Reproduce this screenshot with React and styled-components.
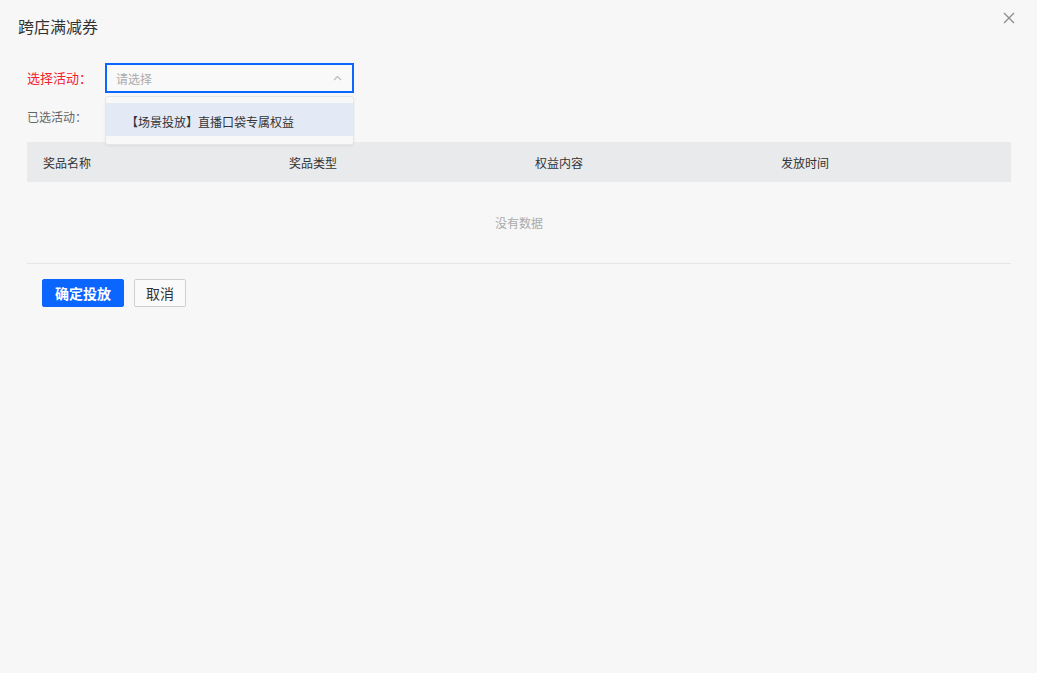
import React from 'react';
import styled, { createGlobalStyle } from 'styled-components';

const GlobalStyle = createGlobalStyle`
  html, body {
    margin: 0;
    padding: 0;
    background: #f7f7f7;
  }
  body {
    font-family: "Noto Sans CJK SC", "Noto Sans", sans-serif;
    color: #333;
  }
`;

const Modal = styled.div`
  position: relative;
  width: 1037px;
  height: 673px;
  background: #f7f7f7;
  box-sizing: border-box;
`;

const Title = styled.h2`
  margin: 0;
  padding: 15px 0 0 18px;
  font-size: 16px;
  line-height: 22px;
  font-weight: 400;
  color: #333;
`;

const CloseButton = styled.button`
  position: absolute;
  top: 11px;
  right: 21px;
  width: 14px;
  height: 14px;
  padding: 0;
  border: 0;
  background: none;
  display: flex;
  align-items: center;
  justify-content: center;
`;

const Body = styled.div`
  padding: 26px 26px 0 27px;
`;

const FormRow = styled.div`
  display: flex;
  align-items: center;
  margin-top: ${({ gap }) => gap || 0}px;
`;

const Label = styled.span`
  width: 78px;
  font-size: ${({ required }) => (required ? 13 : 12)}px;
  line-height: 24px;
  color: ${({ required }) => (required ? '#f5222d' : '#666')};
`;

const SelectWrap = styled.div`
  position: relative;
  width: 249px;
`;

const SelectBox = styled.div`
  height: 30px;
  box-sizing: border-box;
  border: 2px solid #0a66ff;
  background: #f9f9f9;
  display: flex;
  align-items: center;
  justify-content: space-between;
  padding: 0 10px 0 9px;
  font-size: 12px;
  color: #aaa;
`;

const Dropdown = styled.ul`
  position: absolute;
  top: 33px;
  left: 0;
  right: 0;
  margin: 0;
  padding: 6px 0 8px;
  list-style: none;
  background: #f8f8f8;
  border: 1px solid #e6e6e6;
  border-radius: 3px;
  box-shadow: 0 1px 3px rgba(0, 0, 0, 0.06);
  z-index: 10;
`;

const Option = styled.li`
  height: 33px;
  box-sizing: border-box;
  padding: 9px 0 0 20px;
  line-height: 20px;
  font-size: 12px;
  color: #333;
  background: ${({ active }) => (active ? '#e3eaf6' : 'transparent')};
`;

const Table = styled.div`
  margin-top: 13px;
  border-bottom: 1px solid #e6e6e6;
`;

const HeadRow = styled.div`
  display: grid;
  grid-template-columns: repeat(4, 1fr);
  height: 40px;
  align-items: center;
  background: #e9eaec;
`;

const HeadCell = styled.div`
  padding-left: 16px;
  font-size: 12px;
  color: #333;
`;

const Empty = styled.div`
  height: 81px;
  display: flex;
  align-items: center;
  justify-content: center;
  font-size: 12px;
  color: #aaa;
`;

const Actions = styled.div`
  display: flex;
  gap: 10px;
  padding: 15px 0 0 15px;
`;

const Button = styled.button`
  height: 28px;
  box-sizing: border-box;
  padding: 0 ${({ primary }) => (primary ? 12 : 11)}px;
  font-family: inherit;
  font-size: 14px;
  font-weight: ${({ primary }) => (primary ? 700 : 400)};
  border-radius: 2px;
  border: 1px solid ${({ primary }) => (primary ? '#0a66ff' : '#cfcfcf')};
  background: ${({ primary }) => (primary ? '#0a66ff' : '#fafafa')};
  color: ${({ primary }) => (primary ? '#fff' : '#333')};
`;

const columns = ['奖品名称', '奖品类型', '权益内容', '发放时间'];

export default function App() {
  return (
    <Modal>
      <GlobalStyle />
      <Title>跨店满减券</Title>
      <CloseButton aria-label="close">
        <svg width="12" height="12" viewBox="0 0 12 12">
          <path d="M1 1 L11 11 M11 1 L1 11" stroke="#8c8c8c" strokeWidth="1.3" />
        </svg>
      </CloseButton>
      <Body>
        <FormRow>
          <Label required>选择活动：</Label>
          <SelectWrap>
            <SelectBox>
              <span>请选择</span>
              <svg width="9" height="6" viewBox="0 0 9 6">
                <path d="M1 5 L4.5 1.5 L8 5" fill="none" stroke="#bbb" strokeWidth="1.2" />
              </svg>
            </SelectBox>
            <Dropdown>
              <Option active>【场景投放】直播口袋专属权益</Option>
            </Dropdown>
          </SelectWrap>
        </FormRow>
        <FormRow gap={12}>
          <Label>已选活动：</Label>
        </FormRow>
        <Table>
          <HeadRow>
            {columns.map((c) => (
              <HeadCell key={c}>{c}</HeadCell>
            ))}
          </HeadRow>
          <Empty>没有数据</Empty>
        </Table>
        <Actions>
          <Button primary>确定投放</Button>
          <Button>取消</Button>
        </Actions>
      </Body>
    </Modal>
  );
}
